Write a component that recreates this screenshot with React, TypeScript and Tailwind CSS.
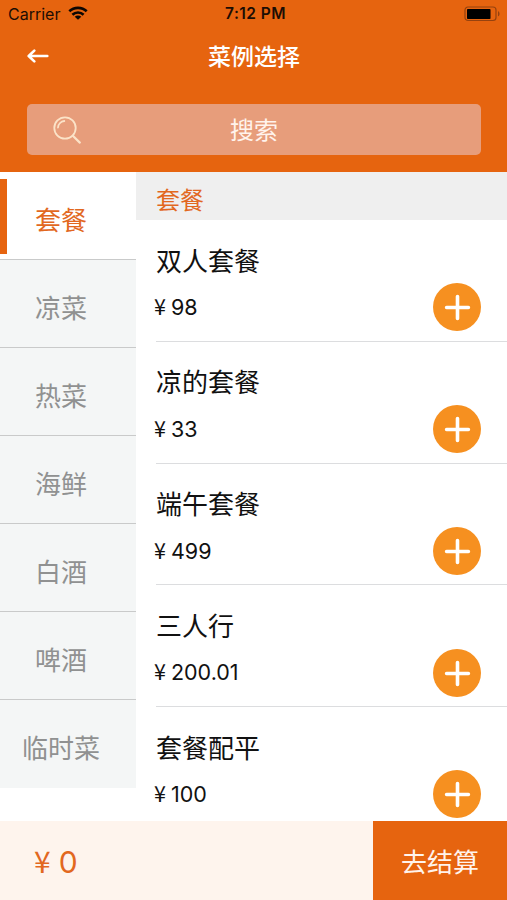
import clsx from "clsx";

const categories = ["套餐", "凉菜", "热菜", "海鲜", "白酒", "啤酒", "临时菜"];

const dishes = [
	{ name: "双人套餐", price: "98" },
	{ name: "凉的套餐", price: "33" },
	{ name: "端午套餐", price: "499" },
	{ name: "三人行", price: "200.01" },
	{ name: "套餐配平", price: "100" },
];

const WifiIcon = () => (
	<svg width="20" height="14" viewBox="0 0 20 14" fill="none" stroke="#0d0703" strokeWidth="2.6" className="-mt-0.5">
		<path d="M1.3 5.3C6 .7 14 .7 18.7 5.3" />
		<path d="M4.4 8.7c3.1-3 8.1-3 11.2 0" />
		<path d="M10 13.8 6.7 10.7c1.8-1.6 4.8-1.6 6.6 0z" fill="#0d0703" stroke="none" />
	</svg>
);

const BatteryIcon = () => (
	<svg width="37" height="16" viewBox="0 0 37 16" fill="none">
		<rect x="1" y="1" width="31" height="13.5" rx="3" stroke="#96420f" strokeWidth="1.2" />
		<rect x="3" y="3" width="23.5" height="10" rx="0.8" fill="#000" />
		<path d="M34 5.2c2 .6 2 4.5 0 5.1z" fill="#96420f" />
	</svg>
);

const StatusBar = () => (
	<div className="grid h-[27px] grid-cols-[1fr_auto_1fr] items-center pl-2 pr-[6px] font-['Inter','Liberation_Sans',sans-serif] text-[#1c0d04]">
		<div className="flex items-center gap-2">
			<span className="text-[16px]">Carrier</span>
			<WifiIcon />
		</div>
		<span className="pl-0.5 pt-px text-[15.5px] font-semibold tracking-[0.45px]">7:12 PM</span>
		<div className="flex justify-end">
			<BatteryIcon />
		</div>
	</div>
);

const Header = () => (
	<header className="h-[172px] shrink-0 bg-[#e6640f]">
		<StatusBar />
		<div className="grid h-[58px] grid-cols-[1fr_auto_1fr] items-center pl-[27px] pr-[26px]">
			<svg width="22" height="14" viewBox="0 0 22 14" fill="none" stroke="#fff" strokeWidth="2.6" strokeLinecap="round" strokeLinejoin="round">
				<path d="M20.3 7H2.5M7.3 1.6 1.7 7l5.6 5.4" />
			</svg>
			<h1 className="pb-0.5 text-[23px] font-medium leading-none text-white">菜例选择</h1>
		</div>
		<div className="ml-[27px] mr-[26px] mt-[19px] grid h-[51px] grid-cols-[1fr_auto_1fr] items-center rounded-[5px] bg-[#e79d7b] px-[26px]">
			<svg width="29" height="29" viewBox="0 0 29 29" fill="none" stroke="#fbe3c8" strokeWidth="1.8" strokeLinecap="round">
				<circle cx="12" cy="13" r="10.7" />
				<path d="M5 12.5C5.3 9 8 6.3 11.3 6" />
				<path d="m19.8 20.8 7 6.8" strokeWidth="2.2" />
			</svg>
			<span className="pb-0.5 text-2xl leading-none text-[#fff3ec]">搜索</span>
		</div>
	</header>
);

const Sidebar = () => (
	<nav className="w-[136px] shrink-0">
		{categories.map((category, i) => (
			<div
				key={category}
				className={clsx(
					"flex h-[88px] items-center",
					i === 0 ? "bg-white text-[#e2681f]" : "bg-[#f4f6f6] text-[#909191]",
					i < categories.length - 1 && "border-b border-[#c9caca]"
				)}
			>
				<span className={clsx("mt-0.5 h-[75px] w-[7px]", i === 0 && "bg-[#e6640f]")} />
				<span className="w-[108px] pt-1.5 text-center text-[26px] leading-none">{category}</span>
			</div>
		))}
	</nav>
);

const AddButton = () => (
	<button className="flex size-12 items-center justify-center rounded-full bg-[#f69020]">
		<svg width="28" height="28" viewBox="0 0 28 28" stroke="#fff" strokeWidth="3.6" strokeLinecap="round">
			<path d="M14.5 3.6v21.8M3.6 14.5h21.8" />
		</svg>
	</button>
);

const Price = ({ value, className }: { value: string; className?: string }) => (
	<span className={clsx("flex items-center leading-none", className)}>
		<span className="pb-1 font-['Noto_Sans_CJK_SC',sans-serif]">¥</span>
		<span className="font-['Inter','Liberation_Sans',sans-serif]">{value}</span>
	</span>
);

const DishList = () => (
	<main className="min-w-0 flex-1 overflow-hidden">
		<h2 className="flex h-12 items-center bg-[#efefef] pl-5 pt-1.5 text-2xl leading-none text-[#e2681f]">套餐</h2>
		{dishes.map(({ name, price }) => (
			<div key={name} className="ml-5 h-[121.8px] border-b border-[#dcdddf] pt-[26.6px] text-[#111]">
				<div className="text-[26px] leading-[26px]">{name}</div>
				<div className="mt-[10.6px] flex items-center justify-between pr-[26px]">
					<Price value={price} className="-ml-[2px] gap-[5px] pt-px text-[21.5px]" />
					<AddButton />
				</div>
			</div>
		))}
	</main>
);

const Footer = () => (
	<footer className="flex h-[79px] shrink-0">
		<div className="flex flex-1 items-center bg-[#fef4ed] pl-[34px] pt-0.5 text-[#e2681f]">
			<Price value="0" className="gap-[8px] text-[30px]" />
		</div>
		<button className="w-[134px] bg-[#e6640f] pt-px text-[26px] leading-none text-[#fff3ec]">去结算</button>
	</footer>
);

const App = () => (
	<div className="flex h-screen w-full flex-col overflow-hidden bg-white font-['Noto_Sans_CJK_SC',sans-serif]">
		<Header />
		<div className="flex min-h-0 flex-1 overflow-hidden">
			<Sidebar />
			<DishList />
		</div>
		<Footer />
	</div>
);

export default App;
